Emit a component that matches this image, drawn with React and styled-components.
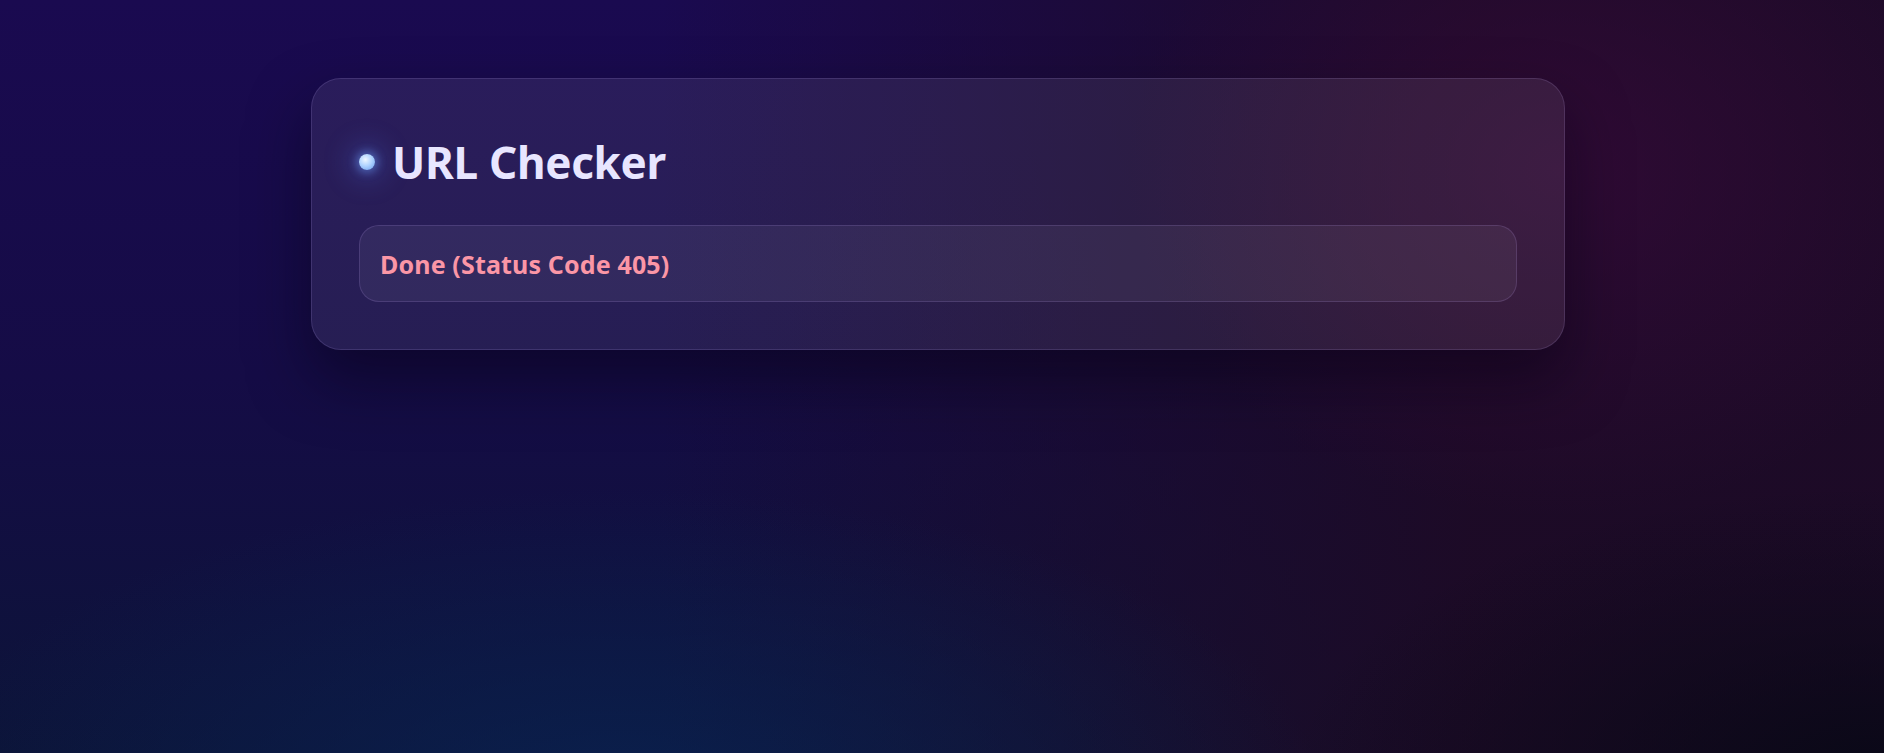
import React from "react";
import styled, { createGlobalStyle } from "styled-components";

const GlobalStyle = createGlobalStyle`
  html, body {
    margin: 0;
    padding: 0;
  }
  body {
    min-height: 100vh;
    font-family: "Noto Sans", "Open Sans", sans-serif;
    background-color: #140b3c;
    background-image:
      radial-gradient(ellipse 600px 480px at 1560px 170px, rgba(52, 10, 56, 0.75), transparent 72%),
      radial-gradient(ellipse 1000px 430px at 620px 790px, rgba(10, 34, 82, 0.8), transparent 70%),
      radial-gradient(ellipse 850px 420px at 1884px 780px, rgba(8, 8, 22, 0.95), transparent 70%),
      linear-gradient(to right, rgba(0, 0, 0, 0) 35%, rgba(30, 10, 36, 0.9) 78%, rgba(30, 10, 36, 0.9) 100%),
      linear-gradient(to bottom, #1a0a50 0%, #150c46 50%, #0c1438 100%);
  }
`;

const Page = styled.main`
  min-height: 100vh;
  box-sizing: border-box;
  padding: 78px 0 0 311px;
`;

const Card = styled.section`
  box-sizing: border-box;
  width: 1254px;
  padding: 54px 47px 47px;
  border-radius: 30px;
  background: rgba(255, 255, 255, 0.075);
  border: 1px solid rgba(200, 180, 255, 0.15);
  box-shadow: 0 30px 60px rgba(5, 0, 20, 0.5);
`;

const Header = styled.div`
  display: flex;
  align-items: center;
  gap: 17px;
  margin-bottom: 34px;
`;

const Dot = styled.span`
  width: 16px;
  height: 16px;
  border-radius: 50%;
  flex-shrink: 0;
  background: radial-gradient(circle at 40% 35%, #eef7ff 0%, #b0d4ff 45%, #6a9cf0 100%);
  box-shadow: 0 0 8px 3px rgba(110, 160, 255, 0.45), 0 0 26px 12px rgba(80, 120, 230, 0.22);
`;

const Title = styled.h1`
  margin: 0;
  font-size: 44px;
  line-height: 58px;
  font-weight: 700;
  color: #e8e6ff;
  letter-spacing: -0.3px;
`;

const Result = styled.div`
  box-sizing: border-box;
  height: 77px;
  display: flex;
  align-items: center;
  padding: 0 20px;
  border-radius: 20px;
  background: rgba(255, 255, 255, 0.055);
  border: 1px solid rgba(200, 170, 255, 0.16);
`;

const Status = styled.span`
  font-size: 25px;
  font-weight: 700;
  letter-spacing: 0.15px;
  color: ${(p) => (p.ok ? "#8fe0b0" : "#fb96a6")};
`;

export default function App() {
  return (
    <>
      <GlobalStyle />
      <Page>
        <Card>
          <Header>
            <Dot />
            <Title>URL Checker</Title>
          </Header>
          <Result>
            <Status>Done (Status Code 405)</Status>
          </Result>
        </Card>
      </Page>
    </>
  );
}
